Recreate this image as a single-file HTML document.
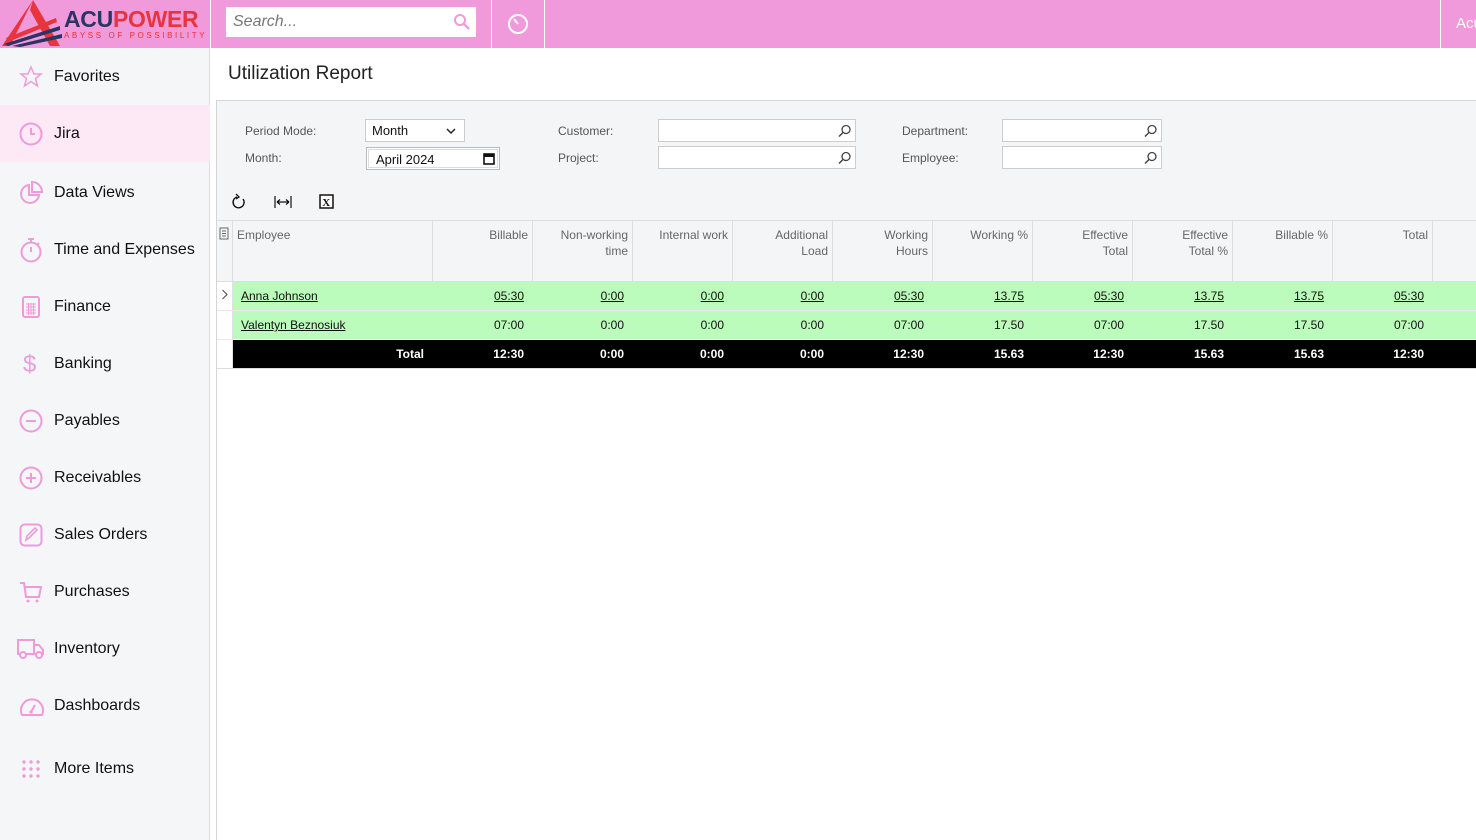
<!DOCTYPE html>
<html><head><meta charset="utf-8"><style>
*{margin:0;padding:0;box-sizing:border-box}
body{width:1476px;height:840px;overflow:hidden;font-family:"Liberation Sans",Arial,sans-serif;background:#fff;position:relative}
.top{position:absolute;left:0;top:0;width:1476px;height:48px;background:#f09adb}
.side{position:absolute;left:0;top:48px;width:210px;height:792px;background:#f5f6f8;border-right:1px solid #dcdcdc}
.item{position:absolute;left:0;width:210px;height:57px;font-size:16px;color:#111}
.item span{position:absolute;left:54px;top:50%;transform:translateY(-50%)}
.item svg{position:absolute;left:19px;top:50%;transform:translateY(-50%)}
.abs{position:absolute}
.lbl{position:absolute;font-size:12px;color:#555}
.inp{position:absolute;background:#fff;border:1px solid #ccc;height:23px}
.th{position:absolute;top:221px;height:61px;border-right:1px solid #ddd;font-size:12px;color:#666;text-align:right;padding:6px 4px 0 0;line-height:16px}
.cell{position:absolute;font-size:12px;text-align:right;padding-right:9px;line-height:29px;height:29px;white-space:nowrap}
</style></head><body>
<div class="top">
 <svg class="abs" style="left:0;top:0" width="64" height="48" viewBox="0 0 64 48">
  <polygon points="33,0 2,46 10,46" fill="#e8343c"/>
  <polygon points="33,0 60,46 50,46 30,10" fill="#e8343c"/>
  <path d="M4 44 L60 26 L60 30 L8 46Z" fill="#2a3566"/>
  <path d="M12 46 L62 34 L62 38 L20 47Z" fill="#2a3566"/>
  <path d="M6 38 L56 18 L57 22 L8 42Z" fill="#e8343c"/>
 </svg>
 <div class="abs" style="left:64px;top:6px;font-size:23px;font-weight:bold;letter-spacing:-0.3px"><span style="color:#2a3566">ACU</span><span style="color:#e8343c">POWER</span></div>
 <div class="abs" style="left:64px;top:31px;font-size:8px;letter-spacing:2.6px;color:#e8343c;white-space:nowrap;width:146px;overflow:hidden">ABYSS OF POSSIBILITY</div>
 <div class="abs" style="left:210px;top:0;width:1px;height:48px;background:#fff"></div>
 <div class="abs" style="left:226px;top:7px;width:250px;height:30px;background:#fff"></div>
 <div class="abs" style="left:233px;top:13px;font-size:16px;font-style:italic;color:#777">Search...</div>
 <svg class="abs" style="left:453px;top:13px" width="18" height="18"><circle cx="7" cy="7" r="5" fill="none" stroke="#f09adb" stroke-width="2"/><line x1="11" y1="11" x2="16" y2="16" stroke="#f09adb" stroke-width="2.4"/></svg>
 <div class="abs" style="left:491px;top:0;width:1px;height:48px;background:#fff"></div>
 <svg class="abs" style="left:506px;top:12px" width="24" height="24"><circle cx="12" cy="12" r="9" fill="none" stroke="#fff" stroke-width="2"/><line x1="12" y1="12" x2="8" y2="7" stroke="#fff" stroke-width="2"/></svg>
 <div class="abs" style="left:544px;top:0;width:1px;height:48px;background:#fff"></div>
 <div class="abs" style="left:1440px;top:0;width:1px;height:48px;background:#fff"></div>
 <div class="abs" style="left:1456px;top:15px;font-size:15px;color:#fff">Acu</div>
</div>
<div class="side">
 <div class="item" style="top:0"><svg width="24" height="24" viewBox="0 0 24 24"><polygon points="12,2 15,9 22,9 16.5,13.5 18.5,21 12,16.5 5.5,21 7.5,13.5 2,9 9,9" fill="none" stroke="#f09adb" stroke-width="1.5"/></svg><span>Favorites</span></div>
 <div class="item" style="top:57px;background:#fde8f5"><svg width="24" height="24"><circle cx="12" cy="12" r="10.5" fill="none" stroke="#f09adb" stroke-width="2"/><path d="M12 6V12H16" fill="none" stroke="#f09adb" stroke-width="2"/></svg><span>Jira</span></div>
 <div class="item" style="top:116px"><svg width="24" height="24"><path d="M10 4A9 9 0 1 0 20 14H10Z" fill="none" stroke="#f09adb" stroke-width="2"/><path d="M13 1V11H23A10 10 0 0 0 13 1Z" fill="none" stroke="#f09adb" stroke-width="2"/></svg><span>Data Views</span></div>
 <div class="item" style="top:173px"><svg width="24" height="26"><circle cx="12" cy="15" r="9.5" fill="none" stroke="#f09adb" stroke-width="2"/><path d="M9 2H15M12 2V6M12 10V15M20 6L18 8" stroke="#f09adb" stroke-width="2"/></svg><span>Time and Expenses</span></div>
 <div class="item" style="top:230px"><svg width="24" height="24"><rect x="4" y="2" width="16" height="20" rx="2" fill="none" stroke="#f09adb" stroke-width="2"/><path d="M7 9H17M7 12H17M7 15H17M7 18H17M9.5 8V20M12 8V20M14.5 8V20" stroke="#f09adb" stroke-width="1"/></svg><span>Finance</span></div>
 <div class="item" style="top:287px"><svg width="24" height="26"><text x="4" y="21" font-size="24" fill="#f09adb" font-family="Liberation Sans">$</text></svg><span>Banking</span></div>
 <div class="item" style="top:344px"><svg width="24" height="24"><circle cx="12" cy="12" r="10.5" fill="none" stroke="#f09adb" stroke-width="2"/><path d="M7 12H17" stroke="#f09adb" stroke-width="2"/></svg><span>Payables</span></div>
 <div class="item" style="top:401px"><svg width="24" height="24"><circle cx="12" cy="12" r="10.5" fill="none" stroke="#f09adb" stroke-width="2"/><path d="M7 12H17M12 7V17" stroke="#f09adb" stroke-width="2"/></svg><span>Receivables</span></div>
 <div class="item" style="top:458px"><svg width="24" height="24"><rect x="1.5" y="1.5" width="21" height="21" rx="4" fill="none" stroke="#f09adb" stroke-width="2"/><path d="M7 17L8 13L16 5L18 7L10 15Z" fill="none" stroke="#f09adb" stroke-width="1.6"/></svg><span>Sales Orders</span></div>
 <div class="item" style="top:515px"><svg width="24" height="24"><path d="M1 3H5L7 17H20L22 7H6" fill="none" stroke="#f09adb" stroke-width="2"/><circle cx="9" cy="21" r="1.5" fill="#f09adb"/><circle cx="18" cy="21" r="1.5" fill="#f09adb"/></svg><span>Purchases</span></div>
 <div class="item" style="top:572px"><svg width="28" height="22" style="left:17px"><path d="M1 2H17V16H1Z M17 7H22L26 12V16H17" fill="none" stroke="#f09adb" stroke-width="2"/><circle cx="6" cy="17" r="3" fill="#f5f6f8" stroke="#f09adb" stroke-width="2"/><circle cx="22" cy="17" r="3" fill="#f5f6f8" stroke="#f09adb" stroke-width="2"/></svg><span>Inventory</span></div>
 <div class="item" style="top:629px"><svg width="26" height="22"><path d="M3 20A11 11 0 1 1 23 20Z" fill="none" stroke="#f09adb" stroke-width="2"/><path d="M12 17L16 10" stroke="#f09adb" stroke-width="2"/><circle cx="12" cy="17" r="1.6" fill="#f09adb"/></svg><span>Dashboards</span></div>
 <div class="item" style="top:692px"><svg width="24" height="24"><g fill="#f09adb"><circle cx="5" cy="5" r="1.7"/><circle cx="12" cy="5" r="1.7"/><circle cx="19" cy="5" r="1.7"/><circle cx="5" cy="12" r="1.7"/><circle cx="12" cy="12" r="1.7"/><circle cx="19" cy="12" r="1.7"/><circle cx="5" cy="19" r="1.7"/><circle cx="12" cy="19" r="1.7"/><circle cx="19" cy="19" r="1.7"/></g></svg><span>More Items</span></div>
</div>
<div class="abs" style="left:228px;top:63px;font-size:19px;color:#222">Utilization Report</div>
<div class="abs" style="left:216px;top:100px;width:1260px;height:740px;border-left:1px solid #d5d5d5;border-top:1px solid #d5d5d5;background:#fff"></div>
<div class="abs" style="left:217px;top:101px;width:1259px;height:119px;background:#f4f5f7"></div>
<div class="lbl" style="left:245px;top:124px">Period Mode:</div>
<div class="lbl" style="left:245px;top:151px">Month:</div>
<div class="inp" style="left:365px;top:119px;width:100px"><span style="position:absolute;left:6px;top:3px;font-size:13px;color:#111">Month</span><svg style="position:absolute;left:80px;top:8px" width="10" height="7"><path d="M1 1L5 5L9 1" fill="none" stroke="#222" stroke-width="1.5"/></svg></div>
<div class="inp" style="left:366px;top:147px;width:134px;border:1px solid #bbb;padding:1px"><div style="border:1px solid #ddd;height:19px;position:relative"><span style="position:absolute;left:7px;top:2px;font-size:13px;color:#111">April 2024</span><svg style="position:absolute;left:113px;top:2px" width="14" height="14"><rect x="2" y="2" width="10" height="10" fill="none" stroke="#111" stroke-width="1.6"/><rect x="2" y="2" width="10" height="3" fill="#111"/></svg></div></div>
<div class="lbl" style="left:558px;top:124px">Customer:</div>
<div class="lbl" style="left:558px;top:151px">Project:</div>
<div class="lbl" style="left:902px;top:124px">Department:</div>
<div class="lbl" style="left:902px;top:151px">Employee:</div>
<div class="inp" style="left:658px;top:119px;width:198px"></div>
<div class="inp" style="left:658px;top:146px;width:198px"></div>
<div class="inp" style="left:1002px;top:119px;width:160px"></div>
<div class="inp" style="left:1002px;top:146px;width:160px"></div>
<svg class="abs" style="left:838px;top:124px" width="14" height="14"><circle cx="8" cy="5.5" r="4" fill="none" stroke="#444" stroke-width="1.3"/><line x1="5" y1="8.5" x2="1" y2="12.5" stroke="#444" stroke-width="1.5"/></svg>
<svg class="abs" style="left:838px;top:151px" width="14" height="14"><circle cx="8" cy="5.5" r="4" fill="none" stroke="#444" stroke-width="1.3"/><line x1="5" y1="8.5" x2="1" y2="12.5" stroke="#444" stroke-width="1.5"/></svg>
<svg class="abs" style="left:1144px;top:124px" width="14" height="14"><circle cx="8" cy="5.5" r="4" fill="none" stroke="#444" stroke-width="1.3"/><line x1="5" y1="8.5" x2="1" y2="12.5" stroke="#444" stroke-width="1.5"/></svg>
<svg class="abs" style="left:1144px;top:151px" width="14" height="14"><circle cx="8" cy="5.5" r="4" fill="none" stroke="#444" stroke-width="1.3"/><line x1="5" y1="8.5" x2="1" y2="12.5" stroke="#444" stroke-width="1.5"/></svg>
<svg class="abs" style="left:231px;top:193px" width="16" height="17"><path d="M12 6A5.5 5.5 0 1 1 6 4" fill="none" stroke="#111" stroke-width="1.4"/><path d="M5 1L8 4L5 6" fill="none" stroke="#111" stroke-width="1.3"/></svg>
<svg class="abs" style="left:274px;top:195px" width="18" height="14"><path d="M1 1V13M17 1V13M3 7H15M3 7L6 4.5M3 7L6 9.5M15 7L12 4.5M15 7L12 9.5" fill="none" stroke="#111" stroke-width="1.2"/></svg>
<svg class="abs" style="left:319px;top:194px" width="16" height="16"><rect x="1" y="1" width="13" height="13" fill="#fff" stroke="#111" stroke-width="1.5"/><text x="3.3" y="12" font-size="11" font-weight="bold" font-family="Liberation Serif" fill="#111">X</text></svg>
<div class="abs" style="left:217px;top:220px;width:1259px;height:1px;background:#ddd"></div>
<div class="abs" style="left:217px;top:221px;width:1259px;height:61px;background:#f4f5f7"></div>
<svg class="abs" style="left:219px;top:227px" width="11" height="13"><rect x="1" y="1" width="8" height="11" fill="none" stroke="#666"/><path d="M3 4H7M3 6.5H7M3 9H7" stroke="#666"/></svg>
<div class="th" style="left:217px;width:16px;padding:0"></div>
<div class="th" style="left:233px;width:200px;text-align:left;padding-left:4px">Employee</div>
<div class="th" style="left:433px;width:100px">Billable</div>
<div class="th" style="left:533px;width:100px">Non-working<br>time</div>
<div class="th" style="left:633px;width:100px">Internal work</div>
<div class="th" style="left:733px;width:100px">Additional<br>Load</div>
<div class="th" style="left:833px;width:100px">Working<br>Hours</div>
<div class="th" style="left:933px;width:100px">Working %</div>
<div class="th" style="left:1033px;width:100px">Effective<br>Total</div>
<div class="th" style="left:1133px;width:100px">Effective<br>Total %</div>
<div class="th" style="left:1233px;width:100px">Billable %</div>
<div class="th" style="left:1333px;width:100px">Total</div>
<div class="abs" style="left:217px;top:281px;width:1259px;height:1px;background:#ddd"></div>
<div class="abs" style="left:233px;top:282px;width:1243px;height:28px;background:#bbfbbb"></div>
<div class="abs" style="left:233px;top:311px;width:1243px;height:28px;background:#bbfbbb"></div>
<div class="abs" style="left:217px;top:310px;width:1259px;height:1px;background:#e8e8e8"></div>
<div class="abs" style="left:217px;top:339px;width:16px;height:1px;background:#e8e8e8"></div>
<div class="abs" style="left:233px;top:340px;width:1243px;height:28px;background:#000"></div>
<div class="abs" style="left:217px;top:368px;width:1259px;height:1px;background:#ddd"></div>
<div class="abs" style="left:232px;top:282px;width:1px;height:87px;background:#e0e0e0"></div>
<svg class="abs" style="left:221px;top:289px" width="8" height="12"><path d="M1.5 1L6 5.5L1.5 10" fill="none" stroke="#555" stroke-width="1.2"/></svg>
<div style="position:absolute;left:0;top:282px;font-size:12px;color:#111">
<div class="cell" style="left:241px;text-align:left;text-decoration:underline">Anna Johnson</div>
<div class="cell" style="left:433px;width:100px;text-decoration:underline">05:30</div>
<div class="cell" style="left:533px;width:100px;text-decoration:underline">0:00</div>
<div class="cell" style="left:633px;width:100px;text-decoration:underline">0:00</div>
<div class="cell" style="left:733px;width:100px;text-decoration:underline">0:00</div>
<div class="cell" style="left:833px;width:100px;text-decoration:underline">05:30</div>
<div class="cell" style="left:933px;width:100px;text-decoration:underline">13.75</div>
<div class="cell" style="left:1033px;width:100px;text-decoration:underline">05:30</div>
<div class="cell" style="left:1133px;width:100px;text-decoration:underline">13.75</div>
<div class="cell" style="left:1233px;width:100px;text-decoration:underline">13.75</div>
<div class="cell" style="left:1333px;width:100px;text-decoration:underline">05:30</div>
</div>
<div style="position:absolute;left:0;top:311px;font-size:12px;color:#111">
<div class="cell" style="left:241px;text-align:left;text-decoration:underline">Valentyn Beznosiuk</div>
<div class="cell" style="left:433px;width:100px">07:00</div>
<div class="cell" style="left:533px;width:100px">0:00</div>
<div class="cell" style="left:633px;width:100px">0:00</div>
<div class="cell" style="left:733px;width:100px">0:00</div>
<div class="cell" style="left:833px;width:100px">07:00</div>
<div class="cell" style="left:933px;width:100px">17.50</div>
<div class="cell" style="left:1033px;width:100px">07:00</div>
<div class="cell" style="left:1133px;width:100px">17.50</div>
<div class="cell" style="left:1233px;width:100px">17.50</div>
<div class="cell" style="left:1333px;width:100px">07:00</div>
</div>
<div style="position:absolute;left:0;top:340px;font-size:12px;color:#fff;font-weight:bold">
<div class="cell" style="left:233px;width:200px">Total</div>
<div class="cell" style="left:433px;width:100px">12:30</div>
<div class="cell" style="left:533px;width:100px">0:00</div>
<div class="cell" style="left:633px;width:100px">0:00</div>
<div class="cell" style="left:733px;width:100px">0:00</div>
<div class="cell" style="left:833px;width:100px">12:30</div>
<div class="cell" style="left:933px;width:100px">15.63</div>
<div class="cell" style="left:1033px;width:100px">12:30</div>
<div class="cell" style="left:1133px;width:100px">15.63</div>
<div class="cell" style="left:1233px;width:100px">15.63</div>
<div class="cell" style="left:1333px;width:100px">12:30</div>
</div>
</body></html>
